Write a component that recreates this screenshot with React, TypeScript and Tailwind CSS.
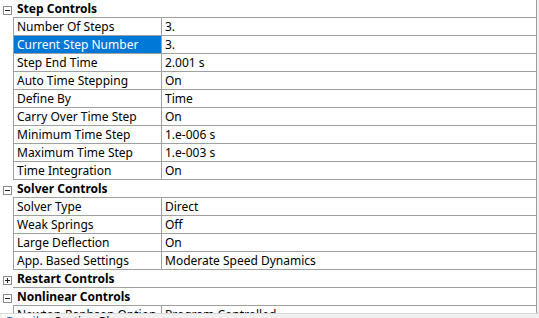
import React from "react";

type Row = { label: string; value: string; selected?: boolean };
type Group = { title: string; open: boolean; rows: Row[] };

const groups: Group[] = [
  {
    title: "Step Controls",
    open: true,
    rows: [
      { label: "Number Of Steps", value: "3." },
      { label: "Current Step Number", value: "3.", selected: true },
      { label: "Step End Time", value: "2.001 s" },
      { label: "Auto Time Stepping", value: "On" },
      { label: "Define By", value: "Time" },
      { label: "Carry Over Time Step", value: "On" },
      { label: "Minimum Time Step", value: "1.e-006 s" },
      { label: "Maximum Time Step", value: "1.e-003 s" },
      { label: "Time Integration", value: "On" },
    ],
  },
  {
    title: "Solver Controls",
    open: true,
    rows: [
      { label: "Solver Type", value: "Direct" },
      { label: "Weak Springs", value: "Off" },
      { label: "Large Deflection", value: "On" },
      { label: "App. Based Settings", value: "Moderate Speed Dynamics" },
    ],
  },
  { title: "Restart Controls", open: false, rows: [] },
  {
    title: "Nonlinear Controls",
    open: true,
    rows: [{ label: "Newton-Raphson Option", value: "Program Controlled" }],
  },
];

function Toggle({ open }: { open: boolean }) {
  return (
    <div className="w-[13px] flex-shrink-0 flex items-start pt-[6px] pl-[3px]">
      <svg width="9" height="9" viewBox="0 0 9 9">
        <rect x="0.5" y="0.5" width="8" height="8" fill="#fff" stroke="#8c8c8c" />
        <line x1="2" y1="4.5" x2="7" y2="4.5" stroke="#222" />
        {!open && <line x1="4.5" y1="2" x2="4.5" y2="7" stroke="#222" />}
      </svg>
    </div>
  );
}

export default function App() {
  return (
    <div
      className="w-[539px] h-[318px] overflow-hidden bg-[#f0f0f0] flex flex-col text-[12px] text-[#000]"
      style={{ fontFamily: '"Noto Sans", "Open Sans", sans-serif' }}
    >
      <div className="h-[313px] flex-shrink-0 overflow-hidden flex">
        <div className="w-[537px] bg-white border-r border-[#a0a0a0] flex flex-col">
          {groups.map((g) => (
            <div key={g.title} className="flex flex-col">
              <div className="h-[18px] flex flex-shrink-0">
                <Toggle open={g.open} />
                <div className="flex-1 border-b border-[#a0a0a0] font-bold pl-[4px] leading-[17px]">
                  {g.title}
                </div>
              </div>
              {g.open &&
                g.rows.map((r) => (
                  <div key={r.label} className="h-[18px] flex flex-shrink-0">
                    <div className="w-[13px] flex-shrink-0" />
                    <div
                      className={
                        "w-[148px] flex-shrink-0 border-l border-b border-[#a0a0a0] pl-[3px] leading-[17px] whitespace-nowrap overflow-hidden " +
                        (r.selected ? "bg-[#0078d7] text-white" : "")
                      }
                    >
                      {r.label}
                    </div>
                    <div className="flex-1 border-l border-b border-[#a0a0a0] pl-[3px] leading-[17px] whitespace-nowrap">
                      {r.value}
                    </div>
                  </div>
                ))}
            </div>
          ))}
        </div>
      </div>
      <div className="h-[5px] flex-shrink-0 flex border-t border-[#dadada] overflow-hidden">
        <div className="bg-white px-[4px] ml-[2px] leading-[14px] pt-[1px] text-[#1a5fb4]">Details</div>
        <div className="px-[6px] leading-[14px] pt-[1px]">Section Planes</div>
      </div>
    </div>
  );
}
